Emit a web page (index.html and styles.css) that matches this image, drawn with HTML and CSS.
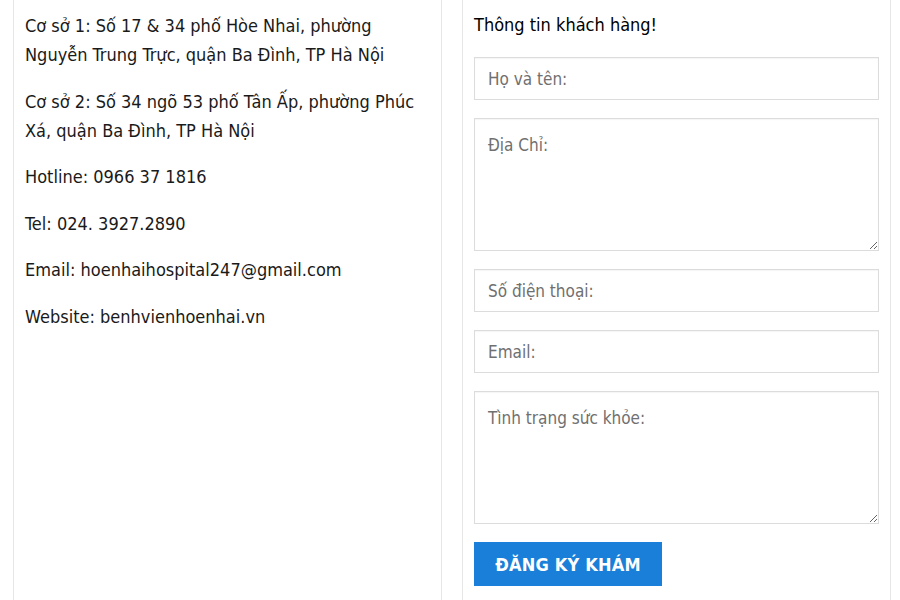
FILE: index.html
```html
<!DOCTYPE html>
<html lang="vi">
<head>
<meta charset="utf-8">
<title>Liên hệ</title>
<link rel="stylesheet" href="styles.css">
</head>
<body>
<div class="page">
  <section class="col info">
    <p>Cơ sở 1: Số 17 &amp; 34 phố Hòe Nhai, phường Nguyễn Trung Trực, quận Ba Đình, TP Hà Nội</p>
    <p>Cơ sở 2: Số 34 ngõ 53 phố Tân Ấp, phường Phúc Xá, quận Ba Đình, TP Hà Nội</p>
    <p>Hotline: 0966 37 1816</p>
    <p>Tel: 024. 3927.2890</p>
    <p>Email: hoenhaihospital247@gmail.com</p>
    <p>Website: benhvienhoenhai.vn</p>
  </section>
  <section class="col form">
    <h3 class="title">Thông tin khách hàng!</h3>
    <input class="field" type="text" placeholder="Họ và tên:">
    <textarea class="field area" placeholder="Địa Chỉ:"></textarea>
    <input class="field" type="text" placeholder="Số điện thoại:">
    <input class="field" type="text" placeholder="Email:">
    <textarea class="field area" placeholder="Tình trạng sức khỏe:"></textarea>
    <button class="submit" type="button">ĐĂNG KÝ KHÁM</button>
  </section>
</div>
</body>
</html>
```
FILE: styles.css
```css
html, body {
  margin: 0;
  padding: 0;
  background: #fff;
}
body {
  font-family: "DejaVu Sans Condensed", "DejaVu Sans", sans-serif;
  font-size: 18px;
  color: #1a1a1a;
}
.page {
  display: grid;
  grid-template-columns: 429px 429px;
  column-gap: 20px;
  padding-left: 13px;
  height: 600px;
  box-sizing: border-box;
}
.col {
  border-left: 1px solid #e6e6e6;
  border-right: 1px solid #e6e6e6;
  padding: 10px 11px 0 11px;
  box-sizing: border-box;
  display: flex;
  flex-direction: column;
}
.info {
  padding-top: 11px;
}
.info p {
  margin: 0 0 17.5px 0;
  line-height: 29px;
}
.title {
  margin: 0 0 18px 0;
  font-weight: normal;
  font-size: 18px;
  line-height: 29px;
  color: #000;
}
.field {
  display: block;
  width: 405px;
  height: 43px;
  box-sizing: border-box;
  margin: 0 0 18px 0;
  border: 1px solid #dcdcdc;
  box-shadow: inset 0 1px 1px rgba(0,0,0,0.04);
  padding: 0 13px;
  font-family: inherit;
  font-size: 17px;
  color: #333;
  background: #fff;
  outline: none;
}
.field::placeholder {
  color: #707070;
}
.area {
  height: 133px;
  padding: 14px 13px;
  line-height: 24px;
}
.submit {
  align-self: flex-start;
  width: 188px;
  height: 44px;
  border: none;
  background: #1a7fd8;
  color: #fff;
  font-family: inherit;
  font-weight: bold;
  font-size: 18px;
  letter-spacing: 0.2px;
  padding: 0;
}
```
